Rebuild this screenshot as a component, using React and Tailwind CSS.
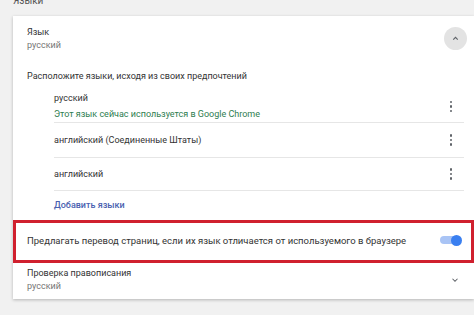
const Kebab = () => (
  <div className="flex flex-col items-center gap-[2px] w-[6px]">
    <span className="block w-[2.5px] h-[2.5px] rounded-full bg-[#5f6368]" />
    <span className="block w-[2.5px] h-[2.5px] rounded-full bg-[#5f6368]" />
    <span className="block w-[2.5px] h-[2.5px] rounded-full bg-[#5f6368]" />
  </div>
);

const languages = [
  { name: "русский", note: "Этот язык сейчас используется в Google Chrome", h: "h-[32px]" },
  { name: "английский (Соединенные Штаты)", h: "h-[35px]" },
  { name: "английский", h: "h-[33px]" },
];

export default function App() {
  return (
    <div
      className="w-[474px] h-[315px] overflow-hidden bg-[#f1f1f1] text-[9px] text-[#333]"
      style={{ fontFamily: "Roboto, 'Noto Sans', sans-serif" }}
    >
      <div className="pl-[13px] mt-[-6px] h-[22px] text-[10px] text-[#555] leading-[13px]">Языки</div>

      <div className="ml-[13px] bg-white shadow-[0_1px_3px_rgba(0,0,0,0.25)] leading-[13px]">
        <div className="h-[45px] flex items-center justify-between pl-[14px] pr-[7px]">
          <div>
            <div>Язык</div>
            <div className="text-[#757575]">русский</div>
          </div>
          <div className="w-[23px] h-[23px] rounded-full bg-[#e3e3e3] flex items-center justify-center">
            <svg width="9" height="9" viewBox="0 0 24 24" fill="none" stroke="#5f6368" strokeWidth="3">
              <path d="M6 15l6-6 6 6" />
            </svg>
          </div>
        </div>

        <div className="h-[30px] flex items-center pl-[14px]">
          Расположите языки, исходя из своих предпочтений
        </div>

        <div className="ml-[41px] mr-[10px]">
          {languages.map((lang) => (
            <div
              key={lang.name}
              className={`${lang.h} flex items-center justify-between border-b border-[#e6e6e6] pr-[10px]`}
            >
              <div>
                <div className={lang.note ? "mb-[3px]" : ""}>{lang.name}</div>
                {lang.note && <div className="text-[#2e7d4f]">{lang.note}</div>}
              </div>
              <Kebab />
            </div>
          ))}
          <div className="h-[29px] flex items-center text-[#4a5fb0] font-medium">Добавить языки</div>
        </div>

        <div className="h-[43px] border-[3px] border-[#d0202e] flex items-center justify-between pl-[11px] pr-[9px] pb-[3px] text-[9.5px]">
          <span>Предлагать перевод страниц, если их язык отличается от используемого в браузере</span>
          <div className="relative w-[22px] h-[10px] flex items-center">
            <div className="w-[20px] h-[8px] rounded-full bg-[#a9c4f5]" />
            <div className="absolute right-0 w-[11px] h-[11px] rounded-full bg-[#3a7ff0]" />
          </div>
        </div>

        <div className="h-[36px] flex items-center justify-between pl-[14px] pr-[14px] pb-[3px]">
          <div>
            <div>Проверка правописания</div>
            <div className="text-[#757575]">русский</div>
          </div>
          <svg width="10" height="10" viewBox="0 0 24 24" fill="none" stroke="#5f6368" strokeWidth="2.5">
            <path d="M6 9l6 6 6-6" />
          </svg>
        </div>
      </div>
    </div>
  );
}
